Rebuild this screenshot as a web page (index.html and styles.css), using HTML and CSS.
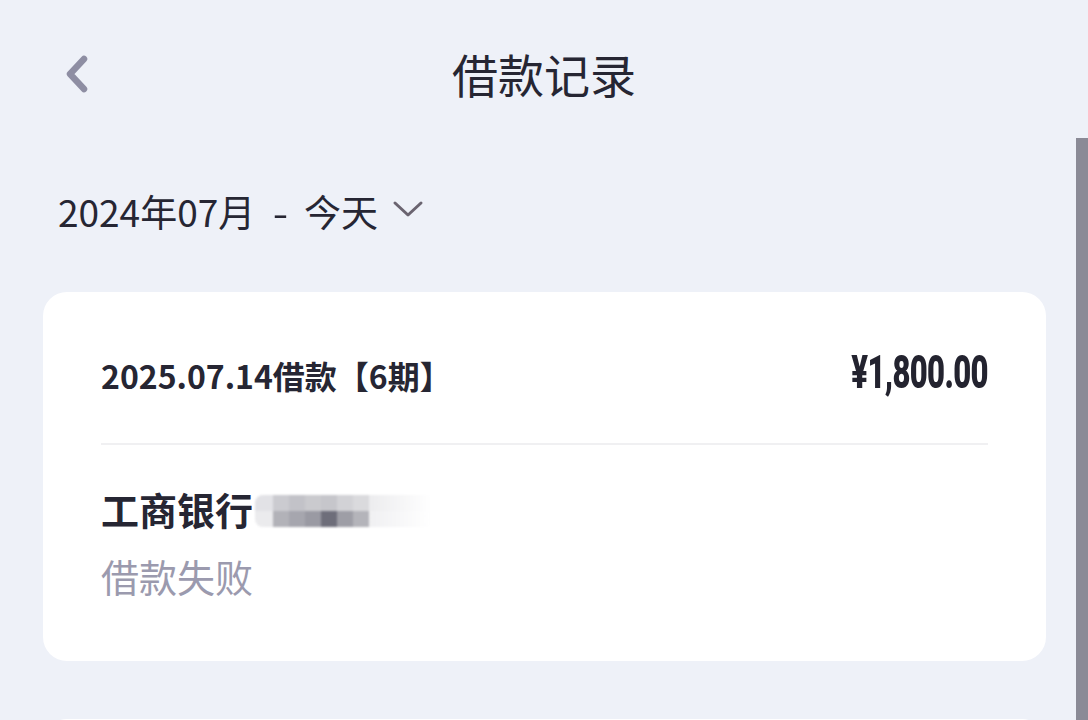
FILE: index.html
```html
<!DOCTYPE html>
<html lang="zh-CN">
<head>
<meta charset="utf-8">
<title>借款记录</title>
<link rel="stylesheet" href="styles.css">
</head>
<body>
<div class="page">
  <header class="nav">
    <div class="nav-left">
      <svg class="back" width="30" height="40" viewBox="0 0 30 40">
        <path d="M20 6 L6 21 L20 36" fill="none" stroke="#8e8ea3" stroke-width="6.5" stroke-linecap="round" stroke-linejoin="round"/>
      </svg>
    </div>
    <h1 class="title">借款记录</h1>
    <div class="nav-right"></div>
  </header>

  <div class="filter">
    <span class="filter-text">2024年07月<span class="dash">-</span>今天</span>
    <svg class="caret" width="32" height="18" viewBox="0 0 32 18">
      <path d="M3 3 L16 15 L29 3" fill="none" stroke="#6a6470" stroke-width="3" stroke-linecap="round" stroke-linejoin="round"/>
    </svg>
  </div>

  <section class="card">
    <div class="card-head">
      <span class="loan-title">2025.07.14借款【6期】</span>
      <span class="amount"><span class="amount-inner">¥1,800.00</span></span>
    </div>
    <div class="divider"></div>
    <div class="card-body">
      <div class="bank">
        <span class="bank-name">工商银行</span>
        <span class="mask">
          <span class="mrow">
            <i class="c a1"></i><i class="c a2"></i><i class="c a3"></i><i class="c a4"></i><i class="c a5"></i><i class="c a6"></i><i class="c a7"></i><i class="c fade"></i>
          </span>
          <span class="mrow">
            <i class="c b1"></i><i class="c b2"></i><i class="c b3"></i><i class="c b4"></i><i class="c b5"></i><i class="c b6"></i><i class="c b7"></i><i class="c fade2"></i>
          </span>
        </span>
      </div>
      <div class="status">借款失败</div>
    </div>
  </section>

  <section class="card card-next"></section>
</div>
<div class="scrollbar"></div>
</body>
</html>
```

FILE: styles.css
```css
html, body {
  margin: 0;
  padding: 0;
}
body {
  background: #eef1f8;
  font-family: "Noto Sans CJK SC", "Noto Sans", sans-serif;
  color: #262633;
  width: 1088px;
  height: 720px;
  overflow: hidden;
  position: relative;
}
.page {
  display: flex;
  flex-direction: column;
}
.nav {
  height: 146px;
  display: grid;
  grid-template-columns: 1fr auto 1fr;
  align-items: center;
}
.nav-left {
  padding-left: 64px;
  display: flex;
  align-items: center;
}
.back {
  display: block;
}
.title {
  margin: 0;
  font-size: 46px;
  font-weight: 400;
  line-height: 60px;
  color: #262633;
}
.filter {
  display: flex;
  align-items: center;
  gap: 14px;
  padding: 40px 0 56px 58px;
  height: 50px;
}
.filter-text {
  font-size: 37px;
  line-height: 50px;
  color: #262633;
}
.dash {
  display: inline-block;
  margin: 0 17px 0 19px;
  transform: scaleX(1.2);
}
.caret {
  display: block;
  margin-top: -4px;
}
.card {
  background: #ffffff;
  border-radius: 24px;
  margin: 0 42px 0 43px;
  padding: 0 58px;
}
.card-head {
  display: flex;
  justify-content: space-between;
  align-items: center;
  padding: 53px 0 38px;
  height: 60px;
}
.loan-title {
  font-size: 32px;
  font-weight: 700;
  line-height: 60px;
  color: #262633;
}
.amount {
  display: block;
  line-height: 60px;
  margin-top: 2px;
}
.amount-inner {
  display: inline-block;
  font-family: "Roboto", "Liberation Sans", sans-serif;
  font-weight: 900;
  font-size: 47px;
  color: #23232f;
  transform: scaleX(0.66);
  transform-origin: right center;
  letter-spacing: -1px;
}
.divider {
  height: 2px;
  background: #f0f0f2;
}
.card-body {
  padding: 39px 0 60px;
  display: flex;
  flex-direction: column;
  gap: 17px;
}
.bank {
  display: flex;
  align-items: center;
  height: 50px;
}
.bank-name {
  font-size: 38px;
  font-weight: 700;
  line-height: 50px;
  color: #262633;
}
.mask {
  display: flex;
  flex-direction: column;
  margin-left: 2px;
  margin-top: 4px;
  filter: blur(1px);
}
.mrow {
  display: flex;
}
.c {
  display: block;
  width: 16px;
  height: 16px;
}
.c.a1 { background: #e2e2e6; width: 18px; border-radius: 8px 0 0 0; }
.c.a2 { background: #cbcbd0; }
.c.a3 { background: #c2c2c8; }
.c.a4 { background: #cacace; }
.c.a5 { background: #c6c6cb; }
.c.a6 { background: #d2d2d6; }
.c.a7 { background: #dadadd; }
.c.fade { width: 62px; background: linear-gradient(90deg, #ececee, #ffffff); }
.c.b1 { background: #ebebed; width: 18px; border-radius: 0 0 0 8px; }
.c.b2 { background: #b2b2b8; }
.c.b3 { background: #a6a6ae; }
.c.b4 { background: #9a9aa3; }
.c.b5 { background: #6e6e7a; }
.c.b6 { background: #9e9ea6; }
.c.b7 { background: #b4b4ba; }
.c.fade2 { width: 62px; background: linear-gradient(90deg, #f0f0f2, #ffffff); }
.status {
  font-size: 38px;
  line-height: 50px;
  color: #9b9aae;
}
.card-next {
  margin-top: 58px;
  height: 200px;
}
.scrollbar {
  position: absolute;
  right: 0;
  top: 138px;
  width: 12px;
  bottom: 0;
  background: #8a8a96;
}
```
